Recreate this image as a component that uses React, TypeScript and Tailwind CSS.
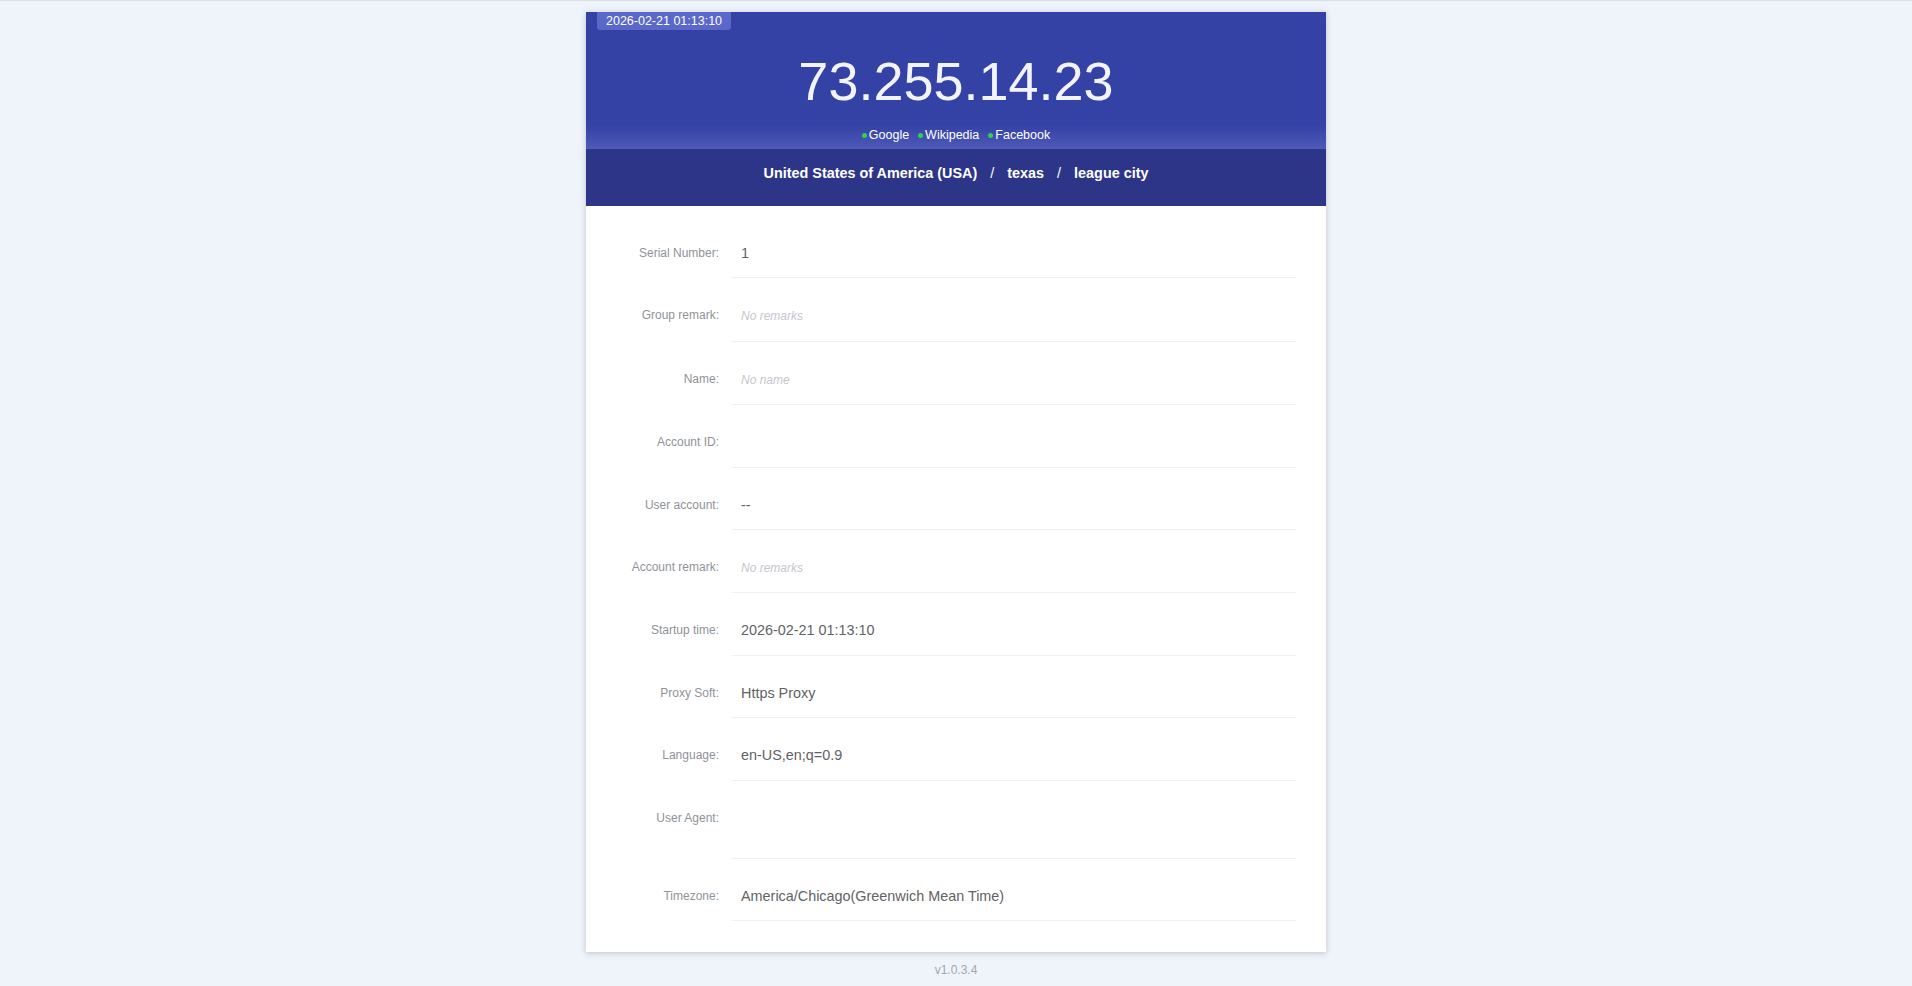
import React from "react";

type Row = { label: string; value?: string; placeholder?: string; tall?: boolean };

const rows: Row[] = [
  { label: "Serial Number:", value: "1" },
  { label: "Group remark:", placeholder: "No remarks" },
  { label: "Name:", placeholder: "No name" },
  { label: "Account ID:", value: "" },
  { label: "User account:", value: "--" },
  { label: "Account remark:", placeholder: "No remarks" },
  { label: "Startup time:", value: "2026-02-21 01:13:10" },
  { label: "Proxy Soft:", value: "Https Proxy" },
  { label: "Language:", value: "en-US,en;q=0.9" },
  { label: "User Agent:", value: "", tall: true },
  { label: "Timezone:", value: "America/Chicago(Greenwich Mean Time)" },
];

function Link({ text }: { text: string }) {
  return (
    <span className="inline-flex items-center">
      <span className="w-[5px] h-[5px] rounded-full bg-[#2fd34a] mr-[2px]" />
      <span>{text}</span>
    </span>
  );
}

export default function App() {
  return (
    <div
      className="min-h-[986px] bg-[#eff3fa] border-t border-[#dcdfe6] flex flex-col items-center"
      style={{ fontFamily: '"Liberation Sans", Arial, sans-serif' }}
    >
      <div className="relative mt-[11px] w-[740px] bg-white shadow-[0_1px_6px_rgba(40,50,90,0.25)]">
        <div className="relative bg-[#3441a5]">
          <div className="absolute left-[11px] top-0 h-[18px] px-[9px] rounded-b-[3px] bg-[#5b67c9] text-white text-[12.5px] leading-[18px]">
            2026-02-21 01:13:10
          </div>
          <div className="pt-[42px] text-center text-[#f3f4fb] text-[54px] leading-[54px]">
            73.255.14.23
          </div>
          <div className="mt-[17px] pb-[4px] bg-gradient-to-b from-[#3441a5] to-[#4e5ab8]">
            <div className="flex justify-center gap-[9px] text-white text-[12.5px] leading-[20px]">
              <Link text="Google" />
              <Link text="Wikipedia" />
              <Link text="Facebook" />
            </div>
          </div>
        </div>
        <div className="bg-[#2c3587] pt-[14px] pb-[23px] text-center text-white text-[14.4px] leading-[20px] font-bold">
          <span>United States of America (USA)</span>
          <span className="mx-[13px] font-normal">/</span>
          <span>texas</span>
          <span className="mx-[13px] font-normal">/</span>
          <span>league city</span>
        </div>
        <div className="pt-[10px] pb-[31px]">
          {rows.map((r) => (
            <div key={r.label} className="flex items-start">
              <div className="w-[133px] shrink-0 pt-[25px] text-right text-[12px] leading-[24px] text-[#8f9399]">
                {r.label}
              </div>
              <div
                className={
                  "ml-[13px] mr-[30px] flex-1 pl-[9px] pt-[25px] pb-[12.42px] border-b border-[#eef0f4] text-[14.4px] " +
                  (r.tall ? "min-h-[78px] leading-[24px]" : "leading-[24px]")
                }
              >
                {r.placeholder ? (
                  <span className="italic text-[12px] text-[#c4c6cc]">{r.placeholder}</span>
                ) : (
                  <span className="text-[#5f6266]">{r.value || "\u00a0"}</span>
                )}
              </div>
            </div>
          ))}
        </div>
      </div>
      <div className="mt-[9px] text-[12px] leading-[18px] text-[#a3a7ae]">v1.0.3.4</div>
    </div>
  );
}
